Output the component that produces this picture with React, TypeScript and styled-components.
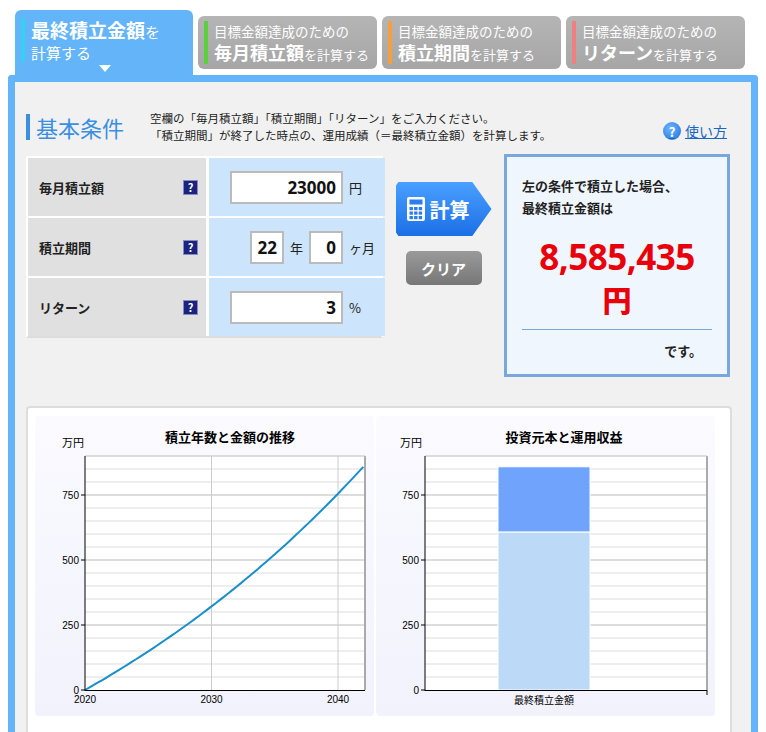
import React from "react";
import styled, { createGlobalStyle } from "styled-components";

const G = createGlobalStyle`
  body { margin: 0; background: #fff; font-family: "Noto Sans CJK JP", "Noto Sans", sans-serif; color: #222; }
`;
const Page = styled.div`width: 766px; height: 732px; overflow: hidden; padding: 10px 8px 0; box-sizing: border-box;`;
const Tabs = styled.div`display: flex; align-items: flex-end; gap: 5px; height: 65px; padding-left: 7px;`;
const ActiveTab = styled.div`
  position: relative; width: 178px; height: 65px; box-sizing: border-box; background: #63b4f8;
  border-radius: 6px 6px 0 0; padding: 8px 0 0 6px; color: #fff;
`;
const Tab = styled.div`
  width: 179px; height: 53px; margin-bottom: 6px; box-sizing: border-box; border-radius: 6px;
  background: linear-gradient(#b5b5b5, #a6a6a6); color: #fff; padding: 5px 0 0 6px; overflow: hidden;
`;
const TabInner = styled.div<{ c: string }>`
  border-left: 4px solid ${p => p.c}; padding-left: 6px;
`;
const Line = styled.div<{ h: number }>`height: ${p => p.h}px; line-height: ${p => p.h}px; white-space: nowrap;`;
const Small = styled.span`font-size: 13.5px;`;
const Big = styled.span<{ s?: number }>`font-size: ${p => p.s ?? 18}px; font-weight: bold;`;
const Suffix = styled.span`font-size: 13px;`;
const Arrow = styled.div`
  position: absolute; left: 84px; bottom: 3px; width: 0; height: 0;
  border-left: 6px solid transparent; border-right: 6px solid transparent; border-top: 7px solid #fff;
`;
const Panel = styled.div`
  border: 7px solid #63b4f8; border-bottom: none; border-radius: 4px 4px 0 0; background: #f1f1f1;
  height: 660px; box-sizing: border-box; padding: 20px 19px 0 11px;
`;
const Header = styled.div`display: flex; align-items: flex-start; height: 52px;`;
const Title = styled.div`
  border-left: 4px solid #3a8fe0; color: #3a8fe0; font-size: 22px; line-height: 26px;
  padding-left: 6px; width: 114px; margin-top: 12px;
`;
const Desc = styled.div`font-size: 11.5px; line-height: 17px; flex: 1; margin-top: 8px;`;
const Help = styled.a`display: flex; align-items: center; gap: 4px; margin-top: 19px; margin-right: 5px; color: #1866c4; text-decoration: underline; font-size: 14px;`;
const HelpIcon = styled.span`
  width: 18px; height: 18px; border-radius: 50%; background: radial-gradient(circle at 40% 35%, #6db5ff, #1a6fd8);
  color: #fff; font-weight: bold; font-size: 13px; display: flex; align-items: center; justify-content: center;
`;
const Mid = styled.div`display: flex; align-items: flex-start;`;
const Table = styled.div`
  display: grid; grid-template-columns: 178px 176px; grid-auto-rows: 58px; gap: 2px 3px;
  background: #fff; border: 2px solid #fff; border-bottom: 2px solid #ddd; margin-top: 2px; width: 357px; box-sizing: border-box;
`;
const Label = styled.div`
  background: #e0e0e0; display: flex; align-items: center; justify-content: space-between;
  padding: 0 8px 0 11px; font-size: 13px; font-weight: bold;
`;
const Q = styled.span`
  width: 13px; height: 13px; background: #1a237e; color: #fff; font-size: 11px; font-weight: bold;
  display: flex; align-items: center; justify-content: center; border: 1px solid #8a8ac0;
`;
const Val = styled.div<{ pr?: number }>`
  background: #cce4fc; display: flex; align-items: center; justify-content: flex-end; gap: 6px;
  padding-right: ${p => p.pr ?? 12}px; font-size: 13px;
`;
const Input = styled.div<{ w: number }>`
  width: ${p => p.w}px; height: 33px; box-sizing: border-box; background: #fff; border: 2px solid #bbb;
  font-family: "Open Sans", sans-serif; font-weight: bold; font-size: 17px; display: flex;
  align-items: center; justify-content: flex-end; padding-right: 5px; color: #111;
`;
const Unit = styled.span<{ w?: number }>`width: ${p => p.w ?? 24}px;`;
const Btns = styled.div`display: flex; flex-direction: column; align-items: center; width: 121px; padding-top: 28px; gap: 15px;`;
const Calc = styled.div`
  width: 96px; height: 54px; background: linear-gradient(#4aa0ff, #1b6fe6);
  clip-path: polygon(0 8%, 3% 0, 80% 0, 100% 50%, 80% 100%, 3% 100%, 0 92%);
  color: #fff; font-size: 20px; font-weight: bold; display: flex; align-items: center; gap: 4px; padding-left: 10px; box-sizing: border-box;
`;
const Clear = styled.div`
  width: 76px; height: 34px; border-radius: 5px; background: linear-gradient(#9a9a9a, #777);
  color: #fff; font-size: 15px; font-weight: bold; display: flex; align-items: center; justify-content: center;
`;
const Result = styled.div`
  width: 226px; height: 223px; box-sizing: border-box; border: 3px solid #7aa7db; background: #f0f6fe;
  padding: 18px 15px 0; font-size: 13px; font-weight: bold; line-height: 22px;
`;
const Amount = styled.div`
  color: #e8000b; text-align: center; font-family: "Open Sans", sans-serif; font-weight: bold;
  font-size: 35px; line-height: 48px; margin-top: 14px; letter-spacing: -0.5px;
`;
const Yen = styled.div`color: #e8000b; text-align: center; font-size: 29px; line-height: 36px; font-weight: 900; margin-bottom: 12px;`;
const Desu = styled.div`border-top: 1px solid #7aa7db; text-align: right; padding: 10px 10px 0 0;`;
const ChartBox = styled.div`
  margin-top: 29px; width: 706px; height: 330px; box-sizing: border-box; border: 2px solid #ddd;
  border-bottom: none; border-radius: 4px; background: #fff; padding: 8px 14px 0 7px; display: flex; gap: 2px;
`;
const Chart = styled.div`width: 339px; height: 300px; background: linear-gradient(#fafaff, #f2f2fd); border-radius: 4px;`;

const Grid = ({ x0, x1 }: { x0: number; x1: number }) => {
  const lines = [];
  for (let v = 50; v <= 900; v += 50) {
    const y = 274 - v * 0.26;
    lines.push(<line key={v} x1={x0} x2={x1} y1={y} y2={y} stroke={v % 250 === 0 ? "#bbb" : "#ddd"} strokeWidth={1} />);
  }
  return <>{lines}</>;
};
const YLabels = ({ x }: { x: number }) => (
  <>
    {[0, 250, 500, 750].map(v => (
      <g key={v}>
        <text x={x - 6} y={274 - v * 0.26 + 4} fontSize="10" textAnchor="end" fontFamily="Liberation Sans Narrow, Liberation Sans, sans-serif">{v}</text>
        <line x1={x - 4} x2={x} y1={274 - v * 0.26} y2={274 - v * 0.26} stroke="#000" />
      </g>
    ))}
  </>
);

function curve() {
  const pts: string[] = [];
  for (let m = 0; m <= 264; m += 4) {
    const r = 0.03 / 12;
    const fv = m === 0 ? 0 : 23000 * ((Math.pow(1 + r, m) - 1) / r);
    const x = 50 + (m / 120) * 126.5;
    const y = 274 - (fv / 10000) * 0.26;
    pts.push(`${x.toFixed(1)},${y.toFixed(1)}`);
  }
  return pts.join(" ");
}

export default function App() {
  return (
    <Page>
      <G />
      <Tabs>
        <ActiveTab>
          <TabInner c="#36d0f0">
            <Line h={24}><Big s={19}>最終積立金額</Big><span style={{ fontSize: 15 }}>を</span></Line>
            <Line h={20}><span style={{ fontSize: 15 }}>計算する</span></Line>
          </TabInner>
          <Arrow />
        </ActiveTab>
        {[["#5ccf3c", "毎月積立額"], ["#f5a040", "積立期間"], ["#f08080", "リターン"]].map(([c, t]) => (
          <Tab key={t}>
            <TabInner c={c}>
              <Line h={19}><Small>目標金額達成のための</Small></Line>
              <Line h={24}><Big>{t}</Big><Suffix>を計算する</Suffix></Line>
            </TabInner>
          </Tab>
        ))}
      </Tabs>
      <Panel>
        <Header>
          <Title>基本条件</Title>
          <Desc>
            空欄の「毎月積立額」「積立期間」「リターン」をご入力ください。<br />
            「積立期間」が終了した時点の、運用成績（＝最終積立金額）を計算します。
          </Desc>
          <Help><HelpIcon>?</HelpIcon>使い方</Help>
        </Header>
        <Mid>
          <Table>
            <Label>毎月積立額<Q>?</Q></Label>
            <Val><Input w={113}>23000</Input><Unit>円</Unit></Val>
            <Label>積立期間<Q>?</Q></Label>
            <Val pr={8}><Input w={34}>22</Input><span>年</span><Input w={34}>0</Input><Unit w={28}>ヶ月</Unit></Val>
            <Label>リターン<Q>?</Q></Label>
            <Val><Input w={113}>3</Input><Unit>%</Unit></Val>
          </Table>
          <Btns>
            <Calc>
              <svg width="20" height="26" viewBox="0 0 20 26">
                <rect x="1" y="1" width="18" height="24" rx="2" fill="#fff" />
                <rect x="3.5" y="3.5" width="13" height="5" fill="#2a7cf0" />
                {[0, 1, 2].map(r => [0, 1, 2].map(c => (
                  <rect key={`${r}${c}`} x={3.5 + c * 4.6} y={11 + r * 4.5} width="3.4" height="3.2" fill="#2a7cf0" />
                )))}
              </svg>
              計算
            </Calc>
            <Clear>クリア</Clear>
          </Btns>
          <Result>
            左の条件で積立した場合、<br />最終積立金額は
            <Amount>8,585,435</Amount>
            <Yen>円</Yen>
            <Desu>です。</Desu>
          </Result>
        </Mid>
        <ChartBox>
          <Chart>
            <svg width="339" height="300">
              <text x="27" y="31" fontSize="11">万円</text>
              <text x="195" y="26" fontSize="13" fontWeight="bold" textAnchor="middle">積立年数と金額の推移</text>
              <rect x="50" y="40" width="280" height="234" fill="#fff" />
              <Grid x0={50} x1={330} />
              {[176.5, 303].map(x => <line key={x} x1={x} x2={x} y1={40} y2={274} stroke="#ccc" />)}
              <line x1="330" x2="330" y1="40" y2="274" stroke="#aaa" strokeWidth="2" />
              <line x1="50" x2="330" y1="40" y2="40" stroke="#ccc" />
              <polyline points={curve()} fill="none" stroke="#1a8fc8" strokeWidth="2" />
              <line x1="50" x2="50" y1="40" y2="275" stroke="#000" />
              <line x1="50" x2="330" y1="274.5" y2="274.5" stroke="#000" />
              <YLabels x={50} />
              {[["2020", 50], ["2030", 176.5], ["2040", 303]].map(([t, x]) => (
                <text key={t} x={x} y="287" fontSize="10" textAnchor="middle" fontFamily="Liberation Sans Narrow, Liberation Sans, sans-serif">{t}</text>
              ))}
            </svg>
          </Chart>
          <Chart>
            <svg width="339" height="300">
              <text x="24" y="31" fontSize="11">万円</text>
              <text x="188" y="26" fontSize="13" fontWeight="bold" textAnchor="middle">投資元本と運用収益</text>
              <rect x="49" y="40" width="282" height="234" fill="#fff" />
              <Grid x0={49} x1={331} />
              <line x1="331" x2="331" y1="40" y2="274" stroke="#aaa" strokeWidth="2" />
              <line x1="49" x2="331" y1="40" y2="40" stroke="#ccc" />
              <rect x="122" y={274 - 858.5 * 0.26} width="92" height={(858.5 - 607.2) * 0.26} fill="#6fa3fc" stroke="#fff" />
              <rect x="122" y={274 - 607.2 * 0.26} width="92" height={607.2 * 0.26} fill="#bcd9f7" stroke="#fff" />
              <line x1="49" x2="49" y1="40" y2="275" stroke="#000" />
              <line x1="49" x2="331" y1="274.5" y2="274.5" stroke="#000" />
              <line x1="331" x2="331" y1="274" y2="279" stroke="#000" />
              <YLabels x={49} />
              <text x="168" y="288" fontSize="10" textAnchor="middle">最終積立金額</text>
            </svg>
          </Chart>
        </ChartBox>
      </Panel>
    </Page>
  );
}
